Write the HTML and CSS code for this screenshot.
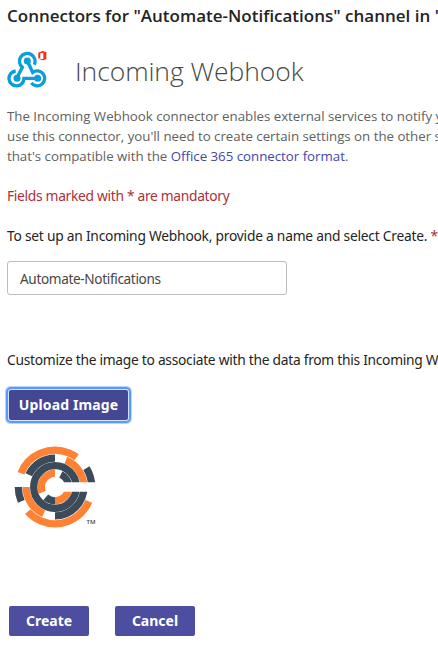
FILE: index.html
```html
<!DOCTYPE html>
<html lang="en">
<head>
<meta charset="utf-8">
<title>Incoming Webhook</title>
<link rel="stylesheet" href="styles.css">
</head>
<body>
<main class="page">
  <h1 class="title">Connectors for "Automate-Notifications" channel in "</h1>
  <header class="connector">
    <svg class="hook" viewBox="20 30 123 120" fill="none" stroke="#0c9ddb" stroke-width="10">
      <path d="M102 74A23.500 23.500 0 1 0 66 82L49 115"/>
      <path d="M81 63L97 97A22.500 22.500 0 1 1 93 129"/>
      <path d="M46 93A22.500 22.500 0 1 0 71 115H112"/>
      <g fill="#0c9ddb" stroke="none"><circle cx="81" cy="63" r="10.500"/><circle cx="50" cy="115" r="10.500"/><circle cx="112" cy="115" r="10.500"/></g>
      <path d="M114 38L127 33L138 36V58L127 61L114 56L129 57V38L120 40V53L114 56Z" fill="#f22e17" stroke="none"/>
    </svg>
    <h2 class="name">Incoming Webhook</h2>
  </header>
  <p class="about">The Incoming Webhook connector enables external services to notify y<br>use this connector, you'll need to create certain settings on the other s<br>that's compatible with the <a class="link">Office 365 connector format</a>.</p>
  <p class="mandatory">Fields marked with * are mandatory</p>
  <label class="label" for="name">To set up an Incoming Webhook, provide a name and select Create. <span class="star">*</span></label>
  <input class="field" id="name" value="Automate-Notifications">
  <p class="custom">Customize the image to associate with the data from this Incoming W</p>
  <button class="button upload">Upload Image</button>
  <svg class="logo" viewBox="-41 -41 86 82">
    <g fill="none" stroke="#ff8133" stroke-width="7.3">
      <circle r="36.700" pathLength="360" stroke-dasharray="104 360" transform="rotate(-158)"/>
      <circle r="36.700" pathLength="360" stroke-dasharray="115 360" transform="rotate(-337)"/>
      <circle r="28.900" pathLength="360" stroke-dasharray="68 360" transform="rotate(-68)"/>
      <circle r="28.900" pathLength="360" stroke-dasharray="67 360" transform="rotate(-247)"/>
      <circle r="13.800" pathLength="360" stroke-dasharray="113 360" transform="rotate(-203)"/>
      <circle r="13.800" pathLength="360" stroke-dasharray="90 360" transform="rotate(-360)"/>
    </g>
    <g fill="none" stroke="#3b4b59" stroke-width="7.3">
      <circle r="36.700" pathLength="360" stroke-dasharray="23 360" transform="rotate(-203)"/>
      <circle r="36.700" pathLength="360" stroke-dasharray="31 360" transform="rotate(-31)"/>
      <circle r="28.900" pathLength="360" stroke-dasharray="65 360" transform="rotate(-155)"/>
      <circle r="28.900" pathLength="360" stroke-dasharray="90 360" transform="rotate(-360)"/>
      <circle r="21.300"/>
      <circle r="13.800" pathLength="360" stroke-dasharray="42 360" transform="rotate(-270)"/>
      <circle r="13.800" pathLength="360" stroke-dasharray="65 360" transform="rotate(-65)"/>
    </g>
    <path d="M5-4.800H45V4.800H5Z" fill="#fff"/>
    <text class="tm" x="31.500" y="37">TM</text>
  </svg>
  <div class="actions">
    <button class="button">Create</button>
    <button class="button">Cancel</button>
  </div>
</main>
</body>
</html>
```
FILE: styles.css
```css
* { box-sizing: border-box; }
body { margin: 0; background: #fff; overflow: hidden; }
.page { width: 438px; height: 648px; padding: 5px 0 0 7px; display: flex; flex-direction: column; align-items: flex-start; overflow: hidden; white-space: nowrap; font-family: "Noto Sans", sans-serif; font-size: 13.8px; line-height: 20px; color: #252423; }
p, h1, h2 { margin: 0; }
.title { font: 600 17px/22px "Open Sans", sans-serif; }
.connector { display: flex; align-items: flex-start; margin-top: 23px; height: 56px; }
.hook { width: 41px; height: 40px; }
.name { margin: 1px 0 0 27px; font: 300 26.5px/40px "Open Sans", sans-serif; letter-spacing: -0.08px; color: #484848; }
.about { font: 400 13.3px/20px "Open Sans", sans-serif; letter-spacing: -0.02px; color: #616161; }
.link { color: #4446a5; }
.mandatory { margin-top: 20px; letter-spacing: -0.31px; color: #ad3038; }
.label { margin-top: 20px; letter-spacing: -0.24px; }
.star { color: #ad3038; }
.field { width: 280px; height: 34px; margin-top: 15px; padding: 0 12px; border: 1px solid #bdbdbd; border-radius: 3px; font: 400 13.6px/20px "Noto Sans", sans-serif; letter-spacing: -0.35px; color: #484644; }
.custom { margin-top: 55px; letter-spacing: -0.28px; }
.button { width: 80px; height: 30px; padding: 0; border: 0; border-radius: 2px; background: #4d4ea0; color: #fff; font: 700 14px/20px "Noto Sans", sans-serif; }
.upload { width: 119px; margin: 20px 0 0 2px; background: #444791; letter-spacing: 0.12px; box-shadow: 0 0 0 1px #d2e5ff, 0 0 0 3px #5c99f8, 0 0 0 4px #b9d4fd; }
.logo { width: 86px; height: 82px; margin: 26px 0 0 7px; }
.tm { font: 600 6px "Open Sans", sans-serif; fill: #3b4b59; }
.actions { display: flex; gap: 26px; margin: 78px 0 0 2px; }
```
